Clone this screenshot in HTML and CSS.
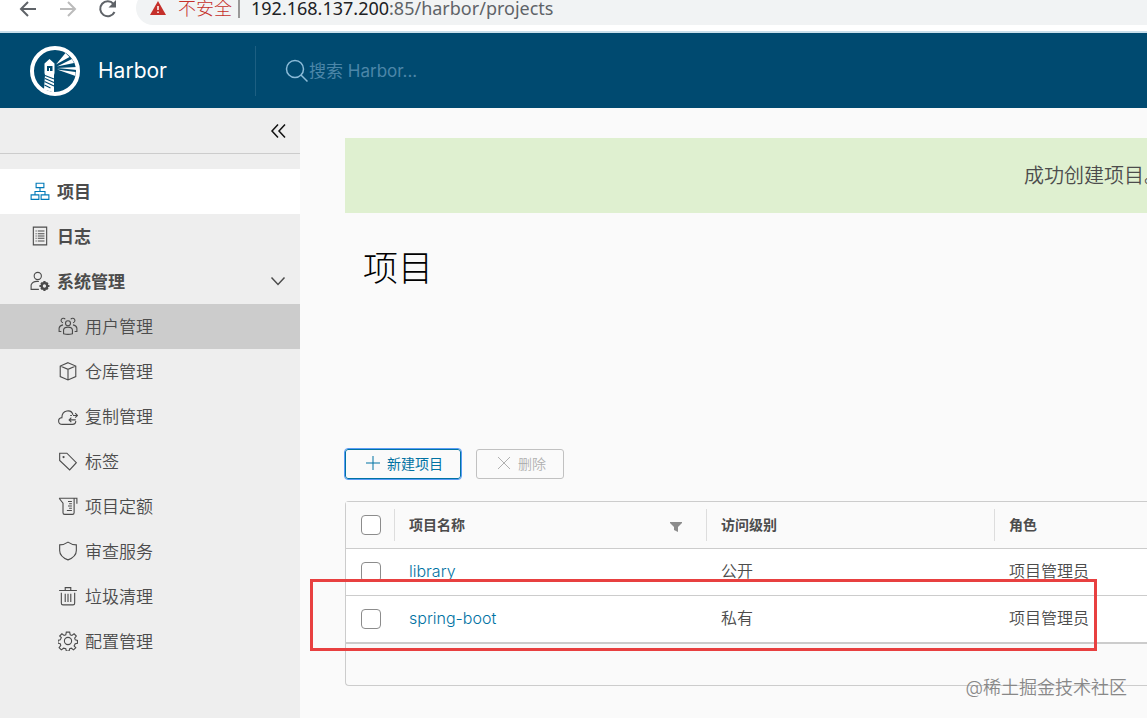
FILE: index.html
```html
<!DOCTYPE html>
<html lang="zh-CN">
<head>
    <meta charset="UTF-8">
    <meta name="viewport" content="width=device-width, initial-scale=1.0">
    <title>Harbor</title>
    <link rel="stylesheet" href="styles.css">
</head>
<body>

    <div class="browser-bar">
        <div class="browser-buttons">
            <button class="icon-button" aria-label="后退"><svg class="browser-icon" viewBox="0 0 20 20"><path d="M18 10H3M10 3l-7 7 7 7"/></svg></button>
            <button class="icon-button faded" aria-label="前进"><svg class="browser-icon" viewBox="0 0 20 20"><path d="M2 10h15M10 3l7 7-7 7"/></svg></button>
            <button class="icon-button" aria-label="刷新"><svg class="browser-icon" viewBox="0 0 20 20"><path d="M16.500 13A7.500 7.500 0 1 1 15.500 5"/><path class="solid" d="M18 1v7.500h-7.500z"/></svg></button>
        </div>
        <div class="address">
            <svg class="warning-icon" viewBox="0 0 16 16"><path d="M8 1l8 14H0z" fill="#c5302b"/><path d="M8 6v4M8 11.500v1.500" stroke="#fff" stroke-width="1.500"/></svg>
            <span class="insecure">不安全</span>
            <span class="address-line"></span>
            <span class="url">192.168.137.200<span class="url-path">:85/harbor/projects</span></span>
        </div>
    </div>

    <header class="header">
        <a class="brand" href="#">
            <svg class="logo" viewBox="0 0 50 50">
                <circle cx="25" cy="25" r="23" fill="none" stroke="#fff" stroke-width="4"/>
                <path fill="#fff" d="M19.500 13l5 4.500V27l-.5 2v17.500l-10-3L15 29l-.5-2v-9.500z"/>
                <path fill="#004a70" d="M17 20h5.500v5H20v-3h-1v3h-2z"/>
                <path stroke="#004a70" stroke-width="1.200" d="M15 29.500l9 3.500M15 32.500l9 4M14.500 35.500l9.500 4.500M14.500 39l6 3"/>
                <path fill="#fff" d="M26 18.500L35.500 7l4 4zM27 20.500l15-7.500 2 4zM27 22l20-1v3zM27 23.500l18.500 2.500v4z"/>
            </svg>
            <span class="brand-name">Harbor</span>
        </a>
        <form class="search">
            <svg class="search-icon" viewBox="0 0 24 24"><circle cx="10" cy="10" r="8.500"/><path d="M16 16l6.500 6.500"/></svg>
            <input class="search-input" type="text" placeholder="搜索 Harbor..." aria-label="搜索 Harbor">
        </form>
    </header>

    <div class="content">
        <nav class="sidebar">
            <div class="collapse-row">
                <button class="icon-button" aria-label="收起"><svg class="collapse-icon" viewBox="0 0 16 16"><path d="M8 1.500L2 8l6 6.500M15 1.500L9 8l6 6.500"/></svg></button>
            </div>
            <a class="nav-item active" href="#">
                <svg class="nav-icon" viewBox="0 0 36 36"><path d="M11 4h14v8H11zM2 25h14v8H2zM20 25h14v8H20zM18 12v6M9 25v-6h18v6"/></svg>
                项目
            </a>
            <a class="nav-item" href="#">
                <svg class="nav-icon" viewBox="0 0 36 36"><path d="M6 2h24v32H6zM10 9h2M14 9h12M10 14h2M14 14h12M10 18h2M14 18h12M10 22h2M14 22h12M10 27h2M14 27h12"/></svg>
                日志
            </a>
            <a class="nav-item" href="#">
                <svg class="nav-icon" viewBox="0 0 36 36"><circle cx="14" cy="9" r="6.500"/><path d="M16 33H2v-8c2-5 7-7 14-6"/><circle cx="26" cy="27" r="5" stroke-width="4"/><path stroke-width="4" d="M26 18v4M26 32v4M17 27h4M31 27h4M20 21l3 3M29 30l3 3M32 21l-3 3M23 30l-3 3"/></svg>
                系统管理
                <svg class="caret-icon" viewBox="0 0 16 16"><path d="M1.500 4.500L8 11.500l6.500-7"/></svg>
            </a>
            <a class="nav-item sub selected" href="#">
                <svg class="nav-icon" viewBox="0 0 36 36"><circle cx="18" cy="13" r="4.500"/><path d="M10 32v-7q1-5 8-5t8 5v7q-8 2-16 0zM13 6a4 4 0 1 0-4 6M23 6a4 4 0 1 1 4 6M9 16q-6 1-7 6v6h4M27 16q6 1 7 6v6h-4"/></svg>
                用户管理
            </a>
            <a class="nav-item sub" href="#">
                <svg class="nav-icon" viewBox="0 0 36 36"><path d="M18 3l14 6v19l-14 6-14-6V9zM4 9l14 6 14-6M18 15v19"/></svg>
                仓库管理
            </a>
            <a class="nav-item sub" href="#">
                <svg class="nav-icon" viewBox="0 0 36 36"><path d="M32 27c0 4-2 6-6 6H8c-9 0-9-11-1-12 0-14 17-16 20-5M22 17h3M27 17h8M31 13l4 4-4 4M32 25H20M24 21l-4 4 4 4"/></svg>
                复制管理
            </a>
            <a class="nav-item sub" href="#">
                <svg class="nav-icon" viewBox="0 0 36 36"><path d="M3 4h13l17 17-12 13L3 17z"/><circle cx="10" cy="11" r="1"/></svg>
                标签
            </a>
            <a class="nav-item sub" href="#">
                <svg class="nav-icon" viewBox="0 0 36 36"><path d="M2 4h32v10M29 4v26q0 3-3 3H12q-3 0-3-3V13L2 4M18 10h7M20 14h5M18 18h7M20 22h5M16 26h9"/></svg>
                项目定额
            </a>
            <a class="nav-item sub" href="#">
                <svg class="nav-icon" viewBox="0 0 36 36"><path d="M18 2q7 5 15 5v10q0 11-15 17Q3 28 3 17V7q8 0 15-5z"/></svg>
                审查服务
            </a>
            <a class="nav-item sub" href="#">
                <svg class="nav-icon" viewBox="0 0 36 36"><path d="M2 8h32M6 12v19q0 3 3 3h18q3 0 3-3V12M13 7V3h10v4M13 14v15M18 14v15M23 14v15"/></svg>
                垃圾清理
            </a>
            <a class="nav-item sub" href="#">
                <svg class="nav-icon" viewBox="0 0 36 36"><circle cx="18" cy="18" r="6.500"/><path d="M15 2h6l1 5 3 1 4-3 4 4-3 4 1 3 4 1v5l-4 1-2 4 3 3-4 4-4-3-3 1-1 4h-5l-1-4-4-1-4 3-4-4 3-4-1-3-4-1v-5l4-1 2-4-3-3 4-4 4 3 3-1z"/></svg>
                配置管理
            </a>
        </nav>

        <main class="main">
            <div class="alert" role="status">成功创建项目。</div>
            <h1 class="title">项目</h1>
            <div class="toolbar">
                <button class="btn btn-primary"><svg class="btn-icon" viewBox="0 0 16 16"><path d="M8 1v14M1 8h14"/></svg>新建项目</button>
                <button class="btn" disabled><svg class="btn-icon" viewBox="0 0 16 16"><path d="M2 2l12 12M14 2L2 14"/></svg>删除</button>
            </div>
            <div class="datagrid">
                <table class="table">
                    <colgroup>
                        <col class="col-check">
                        <col class="col-name">
                        <col class="col-access">
                        <col>
                    </colgroup>
                    <thead>
                        <tr>
                            <th class="check-cell"><input class="checkbox" type="checkbox" aria-label="全选"></th>
                            <th><div class="th-inner">项目名称<svg class="filter-icon" viewBox="0 0 12 16"><path d="M0 5h12v1L8 10v5l-4-2v-3L0 6z"/></svg></div></th>
                            <th><div class="th-inner">访问级别</div></th>
                            <th><div class="th-inner">角色</div></th>
                        </tr>
                    </thead>
                    <tbody>
                        <tr>
                            <td class="check-cell"><input class="checkbox" type="checkbox" aria-label="library"></td>
                            <td><a class="link" href="#">library</a></td>
                            <td>公开</td>
                            <td>项目管理员</td>
                        </tr>
                        <tr>
                            <td class="check-cell"><input class="checkbox" type="checkbox" aria-label="spring-boot"></td>
                            <td><a class="link" href="#">spring-boot</a></td>
                            <td>私有</td>
                            <td>项目管理员</td>
                        </tr>
                    </tbody>
                </table>
                <div class="datagrid-footer"></div>
                <div class="highlight"></div>
            </div>
        </main>
    </div>

    <div class="watermark">@稀土掘金技术社区</div>

</body>
</html>
```

FILE: styles.css
```css
* {
    box-sizing: border-box;
}

body {
    margin: 0;
    height: 100vh;
    display: flex;
    flex-direction: column;
    position: relative;
    overflow: hidden;
    background-color: #fafafa;
    color: #4c4c4c;
    font-family: Inter, "Noto Sans CJK SC", sans-serif;
    font-weight: 350;
}

a {
    color: inherit;
    text-decoration: none;
}

svg {
    fill: none;
    stroke: currentColor;
    flex-shrink: 0;
}

.icon-button {
    display: flex;
    padding: 0;
    border: none;
    background: none;
    color: inherit;
    cursor: pointer;
}

/* Browser bar */
.browser-bar {
    display: flex;
    height: 33px;
    flex-shrink: 0;
    background-color: #fff;
    border-bottom: 2px solid #c9dfeb;
}

.browser-buttons {
    display: flex;
    align-items: center;
    gap: 20px;
    width: 136px;
    height: 18px;
    padding-left: 18px;
    color: #5f6368;
}

.browser-icon {
    width: 20px;
    height: 20px;
    stroke-width: 2;
}

.solid {
    fill: currentColor;
    stroke: none;
}

.faded {
    color: #bbb;
}

.address {
    display: flex;
    flex: 1;
    align-items: center;
    height: 34px;
    margin-top: -9px;
    padding-left: 14px;
    background-color: #f1f3f4;
    border-radius: 17px 0 0 17px;
    font-family: "Noto Sans", "Noto Sans CJK SC", sans-serif;
    font-size: 18px;
    line-height: 18px;
    font-weight: 400;
    white-space: nowrap;
}

.warning-icon {
    width: 16px;
    height: 16px;
    stroke: none;
}

.insecure {
    margin-left: 12px;
    color: #c5302b;
    font-weight: 300;
}

.address-line {
    width: 2px;
    height: 20px;
    margin: 0 11px 0 6px;
    background-color: #999;
}

.url {
    color: #202124;
}

.url-path {
    color: #5f6368;
}

/* Header */
.header {
    display: flex;
    align-items: center;
    height: 75px;
    flex-shrink: 0;
    background-color: #004a70;
}

.brand {
    display: flex;
    align-items: center;
    gap: 18px;
    width: 256px;
    height: 50px;
    padding-left: 30px;
    border-right: 1px solid #1d5f82;
    color: #fff;
}

.logo {
    width: 50px;
    height: 50px;
    stroke: none;
}

.brand-name {
    font-size: 21px;
    font-weight: 400;
}

.search {
    display: flex;
    flex: 1;
    align-items: center;
    padding-left: 29px;
    color: #8bbbd8;
}

.search-icon {
    width: 24px;
    height: 24px;
    stroke-width: 1.5;
}

.search-input {
    flex: 1;
    padding: 0;
    border: none;
    outline: none;
    background: none;
    color: #fff;
    font: inherit;
    font-size: 17px;
    font-weight: 400;
}

.search-input::placeholder {
    color: #4c86a8;
}

/* Sidebar */
.content {
    display: flex;
    flex: 1;
    min-height: 0;
}

.sidebar {
    width: 300px;
    flex-shrink: 0;
    background-color: #eee;
}

.collapse-row {
    display: flex;
    align-items: center;
    justify-content: flex-end;
    height: 46px;
    margin-bottom: 15px;
    padding-right: 14px;
    border-bottom: 1px solid #ccc;
    color: #111;
}

.collapse-icon,
.caret-icon {
    width: 16px;
    height: 16px;
    stroke-width: 1.5;
}

.nav-item {
    display: flex;
    align-items: center;
    gap: 7px;
    height: 45px;
    padding: 0 14px 2px 30px;
    font-size: 17px;
    font-weight: 700;
}

.nav-icon {
    width: 20px;
    height: 20px;
    stroke-width: 2;
}

.caret-icon {
    margin-left: auto;
}

.active {
    background-color: #fff;
}

.active .nav-icon {
    color: #0079b8;
}

.sub {
    padding-left: 58px;
    font-weight: 350;
}

.selected {
    background-color: #ccc;
}

/* Main */
.main {
    flex: 1;
    min-width: 0;
    padding: 30px 0 0 45px;
}

.alert {
    display: flex;
    align-items: center;
    justify-content: flex-end;
    height: 75px;
    margin-right: -17px;
    padding-bottom: 2px;
    background-color: #dff0d0;
    font-size: 20px;
}

.title {
    margin: 30px 0 0 18px;
    color: #000;
    font-size: 35px;
    font-weight: 300;
    line-height: 50px;
}

.toolbar {
    display: flex;
    gap: 15px;
    margin-top: 156px;
}

.btn {
    display: flex;
    align-items: center;
    gap: 6px;
    height: 30px;
    padding: 0 17px 2px 19px;
    border: 1px solid #c1c1c1;
    border-radius: 3px;
    background: none;
    color: #b0b0b0;
    font: inherit;
    font-size: 14px;
}

.btn-primary {
    border-color: #0072a3;
    outline: 1px solid #5b9cf5;
    color: #0072a3;
    font-weight: 400;
}

.btn-icon {
    width: 16px;
    height: 16px;
}

/* Datagrid */
.datagrid {
    position: relative;
    margin-top: 22px;
    border: 1px solid #ccc;
    border-right: none;
    border-radius: 4px 0 0 4px;
}

.table {
    width: 100%;
    border-collapse: collapse;
    table-layout: fixed;
    background-color: #fff;
    font-size: 16px;
    line-height: 20px;
}

.table thead {
    background-color: #fafafa;
}

.table tr {
    height: 47px;
    border-bottom: 1px solid #ccc;
}

.table thead tr {
    height: 46px;
}

.table th,
.table td {
    padding: 0;
    text-align: left;
}

.table td {
    padding: 0 0 1px 15px;
}

.table .check-cell {
    padding: 0 0 0 15px;
}

.col-check {
    width: 48px;
}

.col-name {
    width: 312px;
}

.col-access {
    width: 288px;
}

.th-inner {
    display: flex;
    align-items: center;
    justify-content: space-between;
    height: 32px;
    padding: 0 24px 0 14px;
    border-left: 1px solid #ddd;
    font-size: 14px;
    font-weight: 700;
}

.filter-icon {
    width: 12px;
    height: 16px;
    fill: #8c8c8c;
    stroke: none;
}

.checkbox {
    display: block;
    width: 20px;
    height: 20px;
    margin: 0;
    appearance: none;
    border: 1px solid #8c8c8c;
    border-radius: 4px;
    background-color: #fff;
}

.link {
    color: #0072a3;
}

.datagrid-footer {
    height: 42px;
    border-top: 1px solid #ccc;
}

.highlight {
    position: absolute;
    top: 77px;
    left: -36px;
    right: 50px;
    height: 72px;
    border: 3px solid #e84040;
}

.watermark {
    position: absolute;
    right: 20px;
    bottom: 18px;
    color: #888;
    font-size: 18px;
    line-height: 24px;
}
```
